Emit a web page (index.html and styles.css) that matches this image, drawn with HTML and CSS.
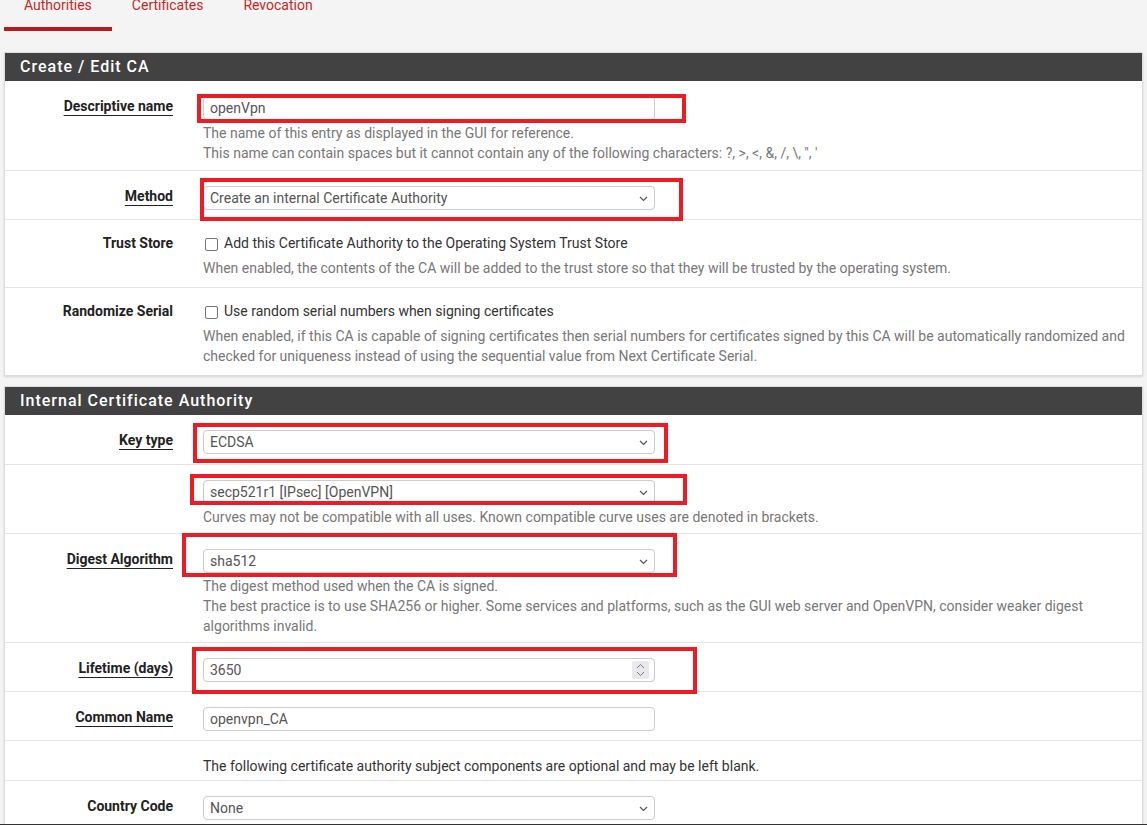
FILE: index.html
```html
<!DOCTYPE html>
<html lang="en">
<head>
  <meta charset="utf-8"/>
  <meta name="viewport" content="width=device-width, initial-scale=1.0"/>
  <title>Certificate Authorities</title>
  <link rel="stylesheet" href="styles.css">
</head>
<body>
  <ul class="tabs">
    <li><a href="#" class="active">Authorities</a></li>
    <li><a href="#">Certificates</a></li>
    <li><a href="#">Revocation</a></li>
  </ul>

  <!-- Create / Edit CA -->
  <div class="panel">
    <div class="panel-heading"><h2 class="panel-title">Create / Edit CA</h2></div>
    <div class="panel-body">
      <div class="form-row">
        <label class="row-label required">Descriptive name</label>
        <div class="row-field">
          <div class="control">
            <input class="form-input" type="text" value="openVpn">
            <span class="mark mark-name"></span>
          </div>
          <p class="help">The name of this entry as displayed in the GUI for reference.<br>This name can contain spaces but it cannot contain any of the following characters: ?, &gt;, &lt;, &amp;, /, \, &quot;, '</p>
        </div>
      </div>

      <div class="form-row">
        <label class="row-label required">Method</label>
        <div class="row-field">
          <div class="control">
            <select class="form-input"><option>Create an internal Certificate Authority</option></select>
            <svg class="caret" width="9" height="6" viewBox="0 0 9 6"><polyline points="1,1 4.5,4.5 8,1" fill="none" stroke="#555" stroke-width="1.2"/></svg>
            <span class="mark mark-method"></span>
          </div>
        </div>
      </div>

      <div class="form-row check-row">
        <label class="row-label">Trust Store</label>
        <div class="row-field">
          <label class="check"><input type="checkbox"> Add this Certificate Authority to the Operating System Trust Store</label>
          <p class="help">When enabled, the contents of the CA will be added to the trust store so that they will be trusted by the operating system.</p>
        </div>
      </div>

      <div class="form-row check-row">
        <label class="row-label">Randomize Serial</label>
        <div class="row-field">
          <label class="check"><input type="checkbox"> Use random serial numbers when signing certificates</label>
          <p class="help">When enabled, if this CA is capable of signing certificates then serial numbers for certificates signed by this CA will be automatically randomized and checked for uniqueness instead of using the sequential value from Next Certificate Serial.</p>
        </div>
      </div>
    </div>
  </div>

  <!-- Internal Certificate Authority -->
  <div class="panel">
    <div class="panel-heading"><h2 class="panel-title">Internal Certificate Authority</h2></div>
    <div class="panel-body">
      <div class="form-row">
        <label class="row-label required">Key type</label>
        <div class="row-field">
          <div class="control">
            <select class="form-input"><option>ECDSA</option></select>
            <svg class="caret" width="9" height="6" viewBox="0 0 9 6"><polyline points="1,1 4.5,4.5 8,1" fill="none" stroke="#555" stroke-width="1.2"/></svg>
            <span class="mark mark-keytype"></span>
          </div>
        </div>
      </div>

      <div class="form-row">
        <label class="row-label"></label>
        <div class="row-field">
          <div class="control">
            <select class="form-input"><option>secp521r1 [IPsec] [OpenVPN]</option></select>
            <svg class="caret" width="9" height="6" viewBox="0 0 9 6"><polyline points="1,1 4.5,4.5 8,1" fill="none" stroke="#555" stroke-width="1.2"/></svg>
            <span class="mark mark-curve"></span>
          </div>
          <p class="help">Curves may not be compatible with all uses. Known compatible curve uses are denoted in brackets.</p>
        </div>
      </div>

      <div class="form-row">
        <label class="row-label required">Digest Algorithm</label>
        <div class="row-field">
          <div class="control">
            <select class="form-input"><option>sha512</option></select>
            <svg class="caret" width="9" height="6" viewBox="0 0 9 6"><polyline points="1,1 4.5,4.5 8,1" fill="none" stroke="#555" stroke-width="1.2"/></svg>
            <span class="mark mark-digest"></span>
          </div>
          <p class="help">The digest method used when the CA is signed.<br>The best practice is to use SHA256 or higher. Some services and platforms, such as the GUI web server and OpenVPN, consider weaker digest algorithms invalid.</p>
        </div>
      </div>

      <div class="form-row">
        <label class="row-label required">Lifetime (days)</label>
        <div class="row-field">
          <div class="control">
            <input class="form-input" type="text" value="3650">
            <span class="spin">
              <svg width="9" height="14" viewBox="0 0 9 14"><polyline points="1,5 4.5,1.5 8,5" fill="none" stroke="#777" stroke-width="1"/><polyline points="1,9 4.5,12.5 8,9" fill="none" stroke="#777" stroke-width="1"/></svg>
            </span>
            <span class="mark mark-lifetime"></span>
          </div>
        </div>
      </div>

      <div class="form-row">
        <label class="row-label required">Common Name</label>
        <div class="row-field">
          <div class="control">
            <input class="form-input" type="text" value="openvpn_CA">
          </div>
        </div>
      </div>

      <div class="form-row text-row">
        <label class="row-label"></label>
        <div class="row-field">The following certificate authority subject components are optional and may be left blank.</div>
      </div>

      <div class="form-row">
        <label class="row-label">Country Code</label>
        <div class="row-field">
          <div class="control">
            <select class="form-input"><option>None</option></select>
            <svg class="caret" width="9" height="6" viewBox="0 0 9 6"><polyline points="1,1 4.5,4.5 8,1" fill="none" stroke="#555" stroke-width="1.2"/></svg>
          </div>
        </div>
      </div>

      <div class="form-row">
        <label class="row-label">State or Province</label>
        <div class="row-field">
          <div class="control">
            <input class="form-input" type="text" value="">
          </div>
        </div>
      </div>
    </div>
  </div>
</body>
</html>
```

FILE: styles.css
```css
body {
  margin: 0;
  background: #f4f4f4;
  font-family: Roboto, "Liberation Sans", sans-serif;
  font-size: 14px;
  color: #333;
}
body::after {
  content: "";
  position: fixed;
  left: 0;
  right: 0;
  bottom: 0;
  height: 1px;
  background: #333;
}

/* tabs */
.tabs { list-style: none; margin: -5px 0 0; padding: 0 0 0 4px; display: flex; }
.tabs a {
  display: block;
  padding: 0 20px 12px;
  line-height: 20px;
  color: #c62828;
  text-decoration: none;
  border-bottom: 4px solid transparent;
}
.tabs a.active { border-bottom-color: #b71c1c; }

/* panels */
.panel {
  margin: 21px 4px 0;
  background: #fff;
  border: 1px solid #dcdcdc;
  box-shadow: 0 1px 2px rgba(0,0,0,.12);
}
.panel + .panel { margin-top: 10px; }
.panel-heading { background: #424242; padding: 4px 15px; }
.panel-title {
  margin: 0;
  font-size: 16px;
  font-weight: 500;
  line-height: 20px;
  letter-spacing: 1px;
  color: #fff;
}

/* form rows */
.form-row {
  display: grid;
  grid-template-columns: 168px 1fr;
  column-gap: 30px;
  padding: 15px 15px 6px 0;
}
.form-row:first-child { padding-bottom: 7px; }
.form-row + .form-row { border-top: 1px solid #e4e4e4; }
.text-row { padding-bottom: 4px; line-height: 20px; }
.check-row { padding-top: 13px; padding-bottom: 9px; }
.row-label {
  text-align: right;
  font-weight: 700;
  line-height: 20px;
  color: #222;
}
.row-label.required { text-decoration: underline; text-underline-offset: 4px; text-decoration-thickness: 1px; }

.control { position: relative; width: 452px; height: 24px; margin-bottom: 3px; }
.form-input {
  width: 100%;
  height: 24px;
  box-sizing: border-box;
  border: 1px solid #ccc;
  border-radius: 4px;
  padding: 0 6px;
  background: #fff;
  font: 14px Roboto, "Liberation Sans", sans-serif;
  color: #555;
  appearance: none;
  -webkit-appearance: none;
}
.caret { position: absolute; right: 7px; top: 10px; }
.spin {
  position: absolute;
  right: 6px;
  top: 3px;
  width: 17px;
  height: 18px;
  border-radius: 2px;
  background: #e9e9ed;
  display: flex;
  align-items: center;
  justify-content: center;
}

.check { display: flex; align-items: center; line-height: 20px; margin-bottom: 5px; }
.check input {
  appearance: none;
  -webkit-appearance: none;
  width: 13px;
  height: 13px;
  margin: 2px 6px 0 2px;
  border: 1px solid #767676;
  border-radius: 2px;
  background: #fff;
}

.help { margin: 0; color: #777; line-height: 20px; }

/* red annotation boxes drawn over the screenshot */
.mark { position: absolute; box-sizing: border-box; border: 4px solid #ed1c24; pointer-events: none; }
.mark-name { left: -6px; top: -2px; width: 489px; height: 29px; }
.mark-method { left: -3px; top: -8px; width: 483px; height: 43px; }
.mark-keytype { left: -10px; top: -7px; width: 475px; height: 40px; }
.mark-curve { left: -13px; top: -6px; width: 497px; height: 31px; }
.mark-digest { left: -21px; top: -16px; width: 495px; height: 44px; }
.mark-lifetime { left: -11px; top: -11px; width: 505px; height: 47px; }
```
